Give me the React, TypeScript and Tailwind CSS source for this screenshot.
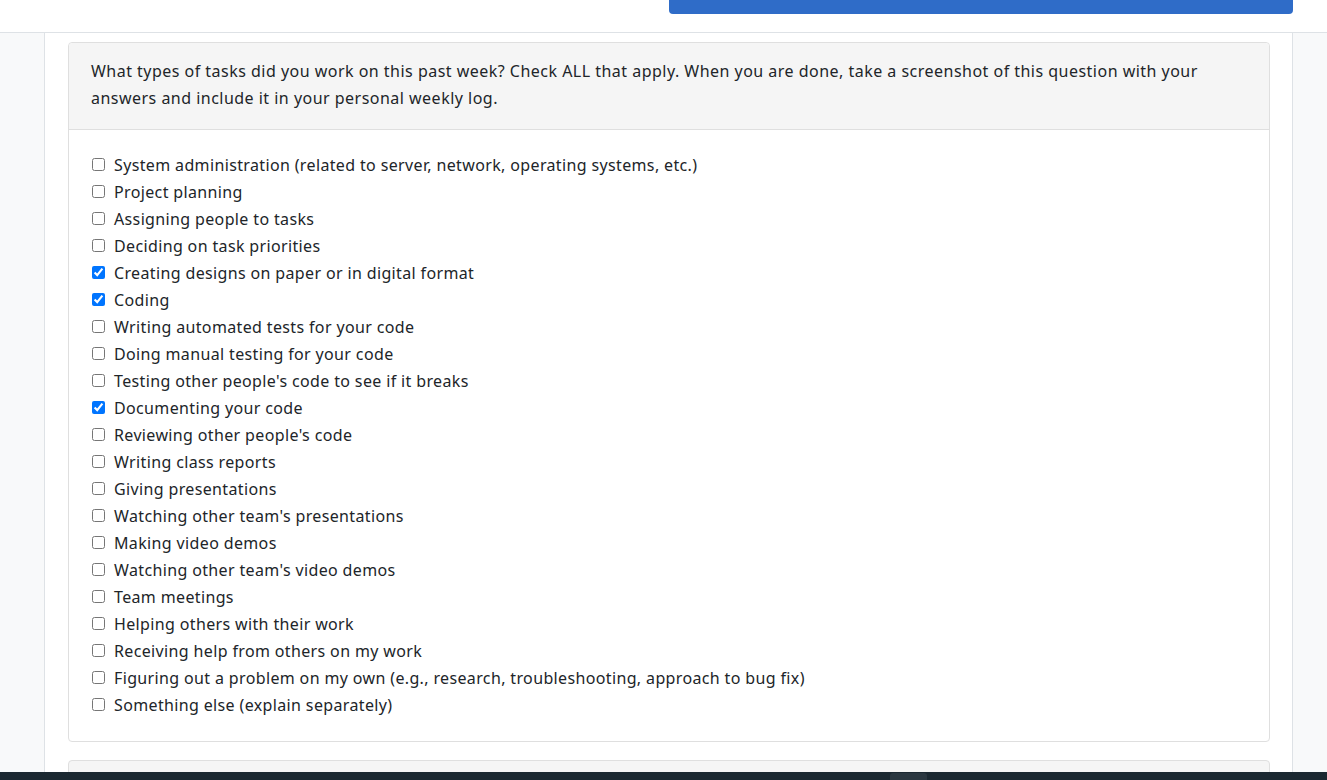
const tasks: [string, boolean][] = [
  ["System administration (related to server, network, operating systems, etc.)", false],
  ["Project planning", false],
  ["Assigning people to tasks", false],
  ["Deciding on task priorities", false],
  ["Creating designs on paper or in digital format", true],
  ["Coding", true],
  ["Writing automated tests for your code", false],
  ["Doing manual testing for your code", false],
  ["Testing other people's code to see if it breaks", false],
  ["Documenting your code", true],
  ["Reviewing other people's code", false],
  ["Writing class reports", false],
  ["Giving presentations", false],
  ["Watching other team's presentations", false],
  ["Making video demos", false],
  ["Watching other team's video demos", false],
  ["Team meetings", false],
  ["Helping others with their work", false],
  ["Receiving help from others on my work", false],
  ["Figuring out a problem on my own (e.g., research, troubleshooting, approach to bug fix)", false],
  ["Something else (explain separately)", false],
]

export default function App() {
  return (
    <div className="h-[780px] w-full overflow-hidden flex flex-col bg-white text-[#212529] font-['Noto_Sans',sans-serif] text-[16px] tracking-[0.36px]">
      <div className="h-[33px] shrink-0 border-b border-[#dee2e6] flex justify-end pr-[34px]">
        <div className="w-[624px] h-[14px] bg-[#2f6cc8] rounded-b-[4px]"></div>
      </div>
      <div className="flex flex-1 min-h-0">
        <div className="w-[45px] shrink-0 bg-[#f8f9fa] border-r border-[#dee2e6]"></div>
        <div className="flex-1 pl-[23px] pr-[22px] pt-[9px] flex flex-col gap-[18px] min-w-0">
          <div className="border border-[#dfdfdf] rounded-[4px] shrink-0">
            <div className="bg-[#f5f5f5] border-b border-[#dfdfdf] px-[22px] pt-[15px] pb-[17px] leading-[27px] tracking-[0.48px] rounded-t-[4px]">
              What types of tasks did you work on this past week? Check ALL that apply. When you are done, take a screenshot of this question with your answers and include it in your personal weekly log.
            </div>
            <div className="px-[22px] pt-[21px] pb-[23px]">
              {tasks.map(([text, checked]) => (
                <label key={text} className="flex items-center h-[27px]">
                  <input type="checkbox" defaultChecked={checked} className="w-[13px] h-[13px] m-0 mr-[9px] ml-px" />
                  <span>{text}</span>
                </label>
              ))}
            </div>
          </div>
          <div className="border border-[#dfdfdf] rounded-t-[4px] bg-[#f5f5f5] h-[40px] shrink-0"></div>
        </div>
        <div className="w-[35px] shrink-0 bg-[#f8f9fa] border-l border-[#dee2e6]"></div>
      </div>
      <div className="h-[8px] shrink-0 bg-[#1b2831] relative">
        <div className="absolute left-[890px] top-[1px] w-[37px] h-[7px] bg-[#2a3740] rounded-t-[3px]"></div>
      </div>
    </div>
  )
}
